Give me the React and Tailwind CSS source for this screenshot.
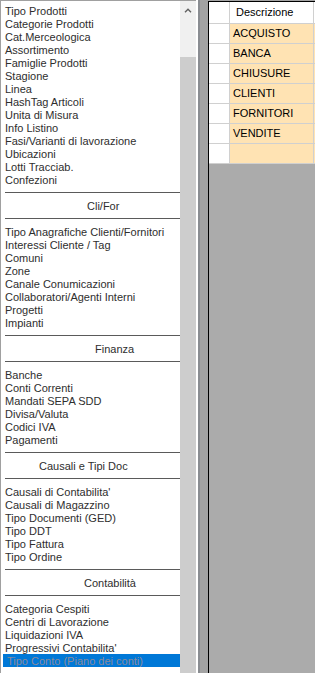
import React from "react";

const groups = [
  {
    header: null,
    items: [
      "Tipo Prodotti",
      "Categorie Prodotti",
      "Cat.Merceologica",
      "Assortimento",
      "Famiglie Prodotti",
      "Stagione",
      "Linea",
      "HashTag Articoli",
      "Unita di Misura",
      "Info Listino",
      "Fasi/Varianti di lavorazione",
      "Ubicazioni",
      "Lotti Tracciab.",
      "Confezioni",
    ],
  },
  {
    header: "Cli/For",
    pad: "pl-[84px]",
    items: [
      "Tipo Anagrafiche Clienti/Fornitori",
      "Interessi Cliente / Tag",
      "Comuni",
      "Zone",
      "Canale Conumicazioni",
      "Collaboratori/Agenti Interni",
      "Progetti",
      "Impianti",
    ],
  },
  {
    header: "Finanza",
    pad: "pl-[92px]",
    items: ["Banche", "Conti Correnti", "Mandati SEPA SDD", "Divisa/Valuta", "Codici IVA", "Pagamenti"],
  },
  {
    header: "Causali e Tipi Doc",
    pad: "pl-[36px]",
    items: [
      "Causali di Contabilita'",
      "Causali di Magazzino",
      "Tipo Documenti (GED)",
      "Tipo DDT",
      "Tipo Fattura",
      "Tipo Ordine",
    ],
  },
  {
    header: "Contabilità",
    pad: "pl-[81px]",
    items: [
      "Categoria Cespiti",
      "Centri di Lavorazione",
      "Liquidazioni IVA",
      "Progressivi Contabilita'",
      "Tipo Conto (Piano dei conti)",
    ],
  },
];

const SELECTED = "Tipo Conto (Piano dei conti)";

function Sep() {
  return (
    <div className="h-[13px] flex items-center pl-[2px]">
      <div className="h-px w-full bg-[#5a5a5a]" />
    </div>
  );
}

function Item({ text }) {
  const sel = text === SELECTED;
  return (
    <div
      className={
        "h-[13px] leading-[13px] pt-px whitespace-nowrap overflow-hidden pl-[2px] " +
        (sel ? "bg-[#0078d7] text-[#8a8a9a]" : "text-[#2e2e2e]")
      }
    >
      <span className={sel ? "ml-[2px]" : ""}>{text}</span>
    </div>
  );
}

const rows = ["ACQUISTO", "BANCA", "CHIUSURE", "CLIENTI", "FORNITORI", "VENDITE", ""];

export default function App() {
  return (
    <div className="w-[315px] h-[673px] flex overflow-hidden bg-[#ababab] font-['Liberation_Sans',Arial,sans-serif] text-[11px]">
      {/* list box */}
      <div className="w-[196px] h-full flex shrink-0 border-l border-t border-[#a0a0a0] bg-white">
        <div className="w-[179px] h-full overflow-hidden pt-[3px] pl-[2px]">
          {groups.map((g, gi) => (
            <div key={gi}>
              {g.header && (
                <>
                  <Sep />
                  <div className={"h-[13px] leading-[13px] pt-px text-[#2e2e2e] whitespace-nowrap " + g.pad}>
                    {g.header}
                  </div>
                  <Sep />
                </>
              )}
              {g.items.map((t) => (
                <Item key={t} text={t} />
              ))}
            </div>
          ))}
        </div>
        {/* scrollbar */}
        <div className="w-[16px] h-full flex flex-col bg-[#f0f0f0]">
          <div className="h-[16px] flex items-center justify-center pt-[3px]">
            <svg width="8" height="5" viewBox="0 0 8 5">
              <path d="M1 4.2 L4 1.2 L7 4.2" fill="none" stroke="#606060" strokeWidth="1.4" />
            </svg>
          </div>
          <div className="h-[40px]" />
          <div className="flex-1 bg-[#cdcdcd]" />
        </div>
      </div>
      {/* splitter */}
      <div className="w-[2px] h-full bg-white shrink-0" />
      <div className="w-[2px] h-full bg-[#8a8d92] shrink-0" />
      <div className="w-[8px] h-full bg-[#a3a3a3] shrink-0" />
      {/* grid */}
      <div className="flex-1 h-full pt-px bg-[#a3a3a3]">
        <div className="h-full border-l border-t border-black bg-[#ababab] overflow-hidden">
          <div className="flex h-[22px] bg-white border-b border-[#d0d0d0]">
            <div className="w-[21px] shrink-0 border-r border-[#d0d0d0]" />
            <div className="w-[84px] shrink-0 border-r border-[#d0d0d0] flex items-center pl-[6px] text-black whitespace-nowrap">
              Descrizione
            </div>
            <div className="flex-1" />
          </div>
          {rows.map((r, i) => (
            <div key={i} className="flex h-[20px] border-b border-[#d0d0d0]">
              <div className="w-[21px] shrink-0 bg-white border-r border-[#d0d0d0]" />
              <div className="w-[84px] shrink-0 bg-[#ffe3b3] border-r border-[#d0d0d0] flex items-center pl-[3px] text-black whitespace-nowrap">
                {r}
              </div>
              <div className="flex-1 bg-[#ffe3b3]" />
            </div>
          ))}
        </div>
      </div>
    </div>
  );
}
